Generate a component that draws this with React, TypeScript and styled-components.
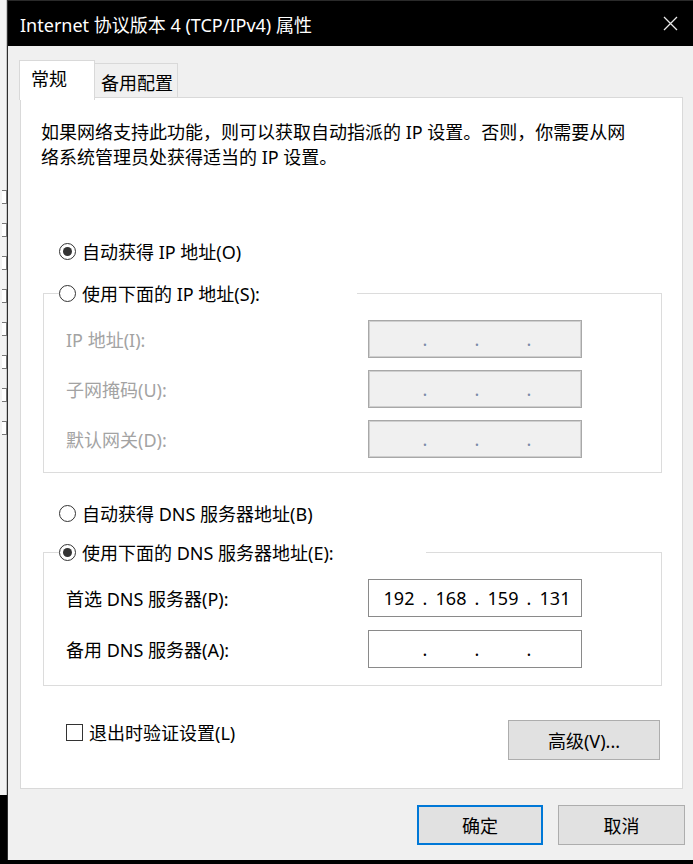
import React from "react";
import styled, { createGlobalStyle } from "styled-components";

const Global = createGlobalStyle`
  html, body { margin: 0; padding: 0; background: #000; }
  body {
    width: 693px; height: 864px; overflow: hidden;
    font-family: "Noto Sans", "Noto Sans CJK SC", sans-serif;
    font-size: 18px; color: #000;
  }
  * { box-sizing: border-box; }
`;

const Screen = styled.div`
  display: flex;
  width: 693px;
  height: 864px;
  background: #000;
`;

const Backdrop = styled.div`
  width: 7px;
  height: 795px;
  background: #f3f3f3;
  display: flex;
  flex-direction: column;
  align-items: flex-start;
  padding-top: 190px;
  gap: 19px;
  border-right: 1px solid #c8c8c8;
`;

const BackdropBox = styled.div`
  width: 5px;
  height: 14px;
  border: 1px solid #777;
  border-left: none;
  background: #fff;
  margin-left: 2px;
`;

const Window = styled.div`
  width: 686px;
  height: 860px;
  display: flex;
  flex-direction: column;
  background: #f0f0f0;
  border-left: 1px solid #2f2f2f;
`;

const TitleBar = styled.div`
  height: 46px;
  flex: none;
  background: #000;
  border-top: 1px solid #2a2a2a;
  display: flex;
  align-items: center;
  justify-content: space-between;
  padding: 0 15px 0 12px;
  color: #fff;
  font-size: 18px;
`;

const Body = styled.div`
  flex: 1;
  display: flex;
  flex-direction: column;
  padding: 14px 11px 0 12px;
`;

const TabStrip = styled.div`
  display: flex;
  align-items: flex-end;
  height: 37px;
  margin-left: -1px;
  position: relative;
  z-index: 1;
`;

const Tab = styled.div<{ $active?: boolean }>`
  display: flex;
  align-items: center;
  font-size: 18px;
  border: 1px solid #d9d9d9;
  ${(p) =>
    p.$active
      ? `background: #fff; height: 40px; width: 76px; padding-left: 11px; border-bottom: none; margin-bottom: -3px; padding-bottom: 5px;`
      : `background: #f0f0f0; height: 34px; width: 83px; padding-left: 6px; border-left: none; border-bottom: none; padding-top: 2px;`}
`;

const Panel = styled.div`
  width: 663px;
  height: 692px;
  background: #fff;
  border: 1px solid #d9d9d9;
  display: flex;
  flex-direction: column;
  padding: 0 20px 0 20px;
`;

const Description = styled.p`
  margin: 22px 0 0 0;
  line-height: 25px;
  font-size: 18px;
`;

const OptionRow = styled.label<{ $top: number }>`
  display: flex;
  align-items: center;
  height: 24px;
  margin: ${(p) => p.$top}px 0 0 18px;
  gap: 6px;
  white-space: nowrap;
`;

const RadioDot = styled.span<{ $checked?: boolean }>`
  width: 17px;
  height: 17px;
  flex: none;
  border-radius: 50%;
  border: 1px solid #333;
  background: #fff;
  display: flex;
  align-items: center;
  justify-content: center;
  &::after {
    content: "";
    width: 9px;
    height: 9px;
    border-radius: 50%;
    background: ${(p) => (p.$checked ? "#333" : "transparent")};
  }
`;

const CheckBox = styled.span`
  width: 17px;
  height: 17px;
  flex: none;
  border: 1px solid #333;
  background: #fff;
`;

const Group = styled.fieldset<{ $top: number; $pb: number }>`
  margin: ${(p) => p.$top}px 0 0 2px;
  width: 619px;
  padding: 0 0 ${(p) => p.$pb}px 0;
  border: 1px solid #dcdcdc;
  min-width: 0;
`;

const Legend = styled.legend<{ $w: number }>`
  margin-left: 15px;
  padding: 0;
  width: ${(p) => p.$w}px;
  height: 24px;
  display: flex;
  align-items: center;
  gap: 6px;
  white-space: nowrap;
  background: #fff;
`;

const FieldGrid = styled.div<{ $gap: number }>`
  display: grid;
  grid-template-columns: 302px 214px;
  row-gap: ${(p) => p.$gap}px;
  margin-top: 15px;
  padding-left: 22px;
  align-items: center;
`;

const FieldLabel = styled.span<{ $disabled?: boolean }>`
  color: ${(p) => (p.$disabled ? "#a3a3a3" : "#000")};
  white-space: nowrap;
`;

const IpBox = styled.div<{ $disabled?: boolean }>`
  width: 214px;
  height: 38px;
  display: flex;
  align-items: center;
  padding-left: 10px;
  border: 1px solid ${(p) => (p.$disabled ? "#a8a8a8" : "#8a8a8a")};
  box-shadow: ${(p) => (p.$disabled ? "inset 0 0 0 1px #cfcfcf" : "none")};
  background: ${(p) => (p.$disabled ? "#f0f0f0" : "#fff")};
  color: ${(p) => (p.$disabled ? "#7a8aa8" : "#000")};
  font-size: 18px;
`;

const Octet = styled.span`
  width: 40px;
  text-align: center;
`;

const Dot = styled.span`
  width: 12px;
  text-align: center;
`;

const BottomRow = styled.div`
  display: flex;
  justify-content: space-between;
  align-items: flex-start;
  margin-top: 34px;
  padding: 0 2px 0 25px;
`;

const CheckRow = styled.label`
  display: flex;
  align-items: center;
  gap: 6px;
  height: 24px;
  white-space: nowrap;
`;

const Button = styled.button<{ $w: number; $primary?: boolean }>`
  width: ${(p) => p.$w}px;
  height: 40px;
  background: #e1e1e1;
  border: ${(p) => (p.$primary ? "2px solid #0078d7" : "1px solid #adadad")};
  font-family: inherit;
  font-size: 18px;
  color: #000;
  padding: 0;
  display: flex;
  align-items: center;
  justify-content: center;
`;

const Footer = styled.div`
  display: flex;
  justify-content: flex-end;
  gap: 15px;
  margin: 16px -3px 0 0;
`;

const CloseIcon = () => (
  <svg width="15" height="15" viewBox="0 0 15 15">
    <path d="M1 1 L14 14 M14 1 L1 14" stroke="#e8e8e8" strokeWidth="1.3" fill="none" />
  </svg>
);

const IpField = ({ value, disabled }: { value?: string[]; disabled?: boolean }) => {
  const parts = value ?? ["", "", "", ""];
  return (
    <IpBox $disabled={disabled}>
      {parts.map((p, i) => (
        <React.Fragment key={i}>
          <Octet>{p}</Octet>
          {i < 3 && <Dot>.</Dot>}
        </React.Fragment>
      ))}
    </IpBox>
  );
};

export default function App() {
  return (
    <>
      <Global />
      <Screen>
        <Backdrop>
          {Array.from({ length: 8 }).map((_, i) => (
            <BackdropBox key={i} />
          ))}
        </Backdrop>
        <Window>
          <TitleBar>
            <span>Internet 协议版本 4 (TCP/IPv4) 属性</span>
            <CloseIcon />
          </TitleBar>
          <Body>
            <TabStrip>
              <Tab $active>常规</Tab>
              <Tab>备用配置</Tab>
            </TabStrip>
            <Panel>
              <Description>
                如果网络支持此功能，则可以获取自动指派的 IP 设置。否则，你需要从网
                <br />
                络系统管理员处获得适当的 IP 设置。
              </Description>

              <OptionRow $top={69}>
                <RadioDot $checked />
                自动获得 IP 地址(O)
              </OptionRow>

              <Group $top={18} $pb={14}>
                <Legend $w={298}>
                  <RadioDot />
                  使用下面的 IP 地址(S):
                </Legend>
                <FieldGrid $gap={12}>
                  <FieldLabel $disabled>IP 地址(I):</FieldLabel>
                  <IpField disabled />
                  <FieldLabel $disabled>子网掩码(U):</FieldLabel>
                  <IpField disabled />
                  <FieldLabel $disabled>默认网关(D):</FieldLabel>
                  <IpField disabled />
                </FieldGrid>
              </Group>

              <OptionRow $top={28}>
                <RadioDot />
                自动获得 DNS 服务器地址(B)
              </OptionRow>

              <Group $top={15} $pb={17}>
                <Legend $w={367}>
                  <RadioDot $checked />
                  使用下面的 DNS 服务器地址(E):
                </Legend>
                <FieldGrid $gap={13}>
                  <FieldLabel>首选 DNS 服务器(P):</FieldLabel>
                  <IpField value={["192", "168", "159", "131"]} />
                  <FieldLabel>备用 DNS 服务器(A):</FieldLabel>
                  <IpField />
                </FieldGrid>
              </Group>

              <BottomRow>
                <CheckRow>
                  <CheckBox />
                  退出时验证设置(L)
                </CheckRow>
                <Button $w={152}>高级(V)...</Button>
              </BottomRow>
            </Panel>
            <Footer>
              <Button $w={126} $primary>
                确定
              </Button>
              <Button $w={127}>取消</Button>
            </Footer>
          </Body>
        </Window>
      </Screen>
    </>
  );
}
